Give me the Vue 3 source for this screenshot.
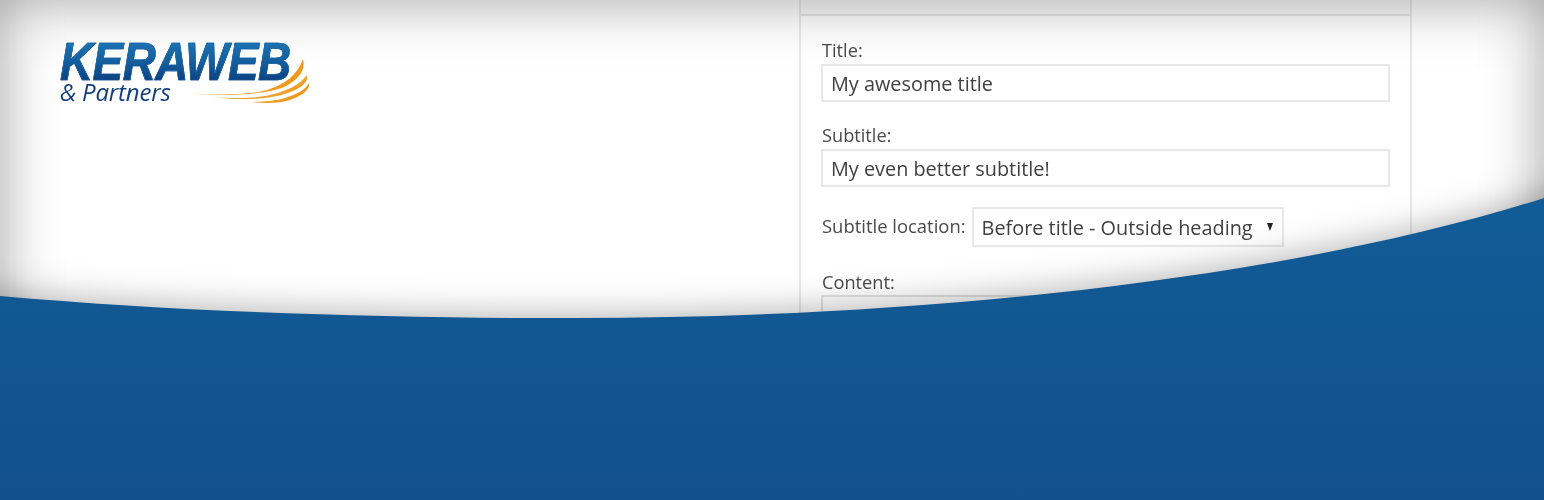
<script setup>
const wave = 'M1544 198 C 1280 282, 900 320, 550 318 C 380 318, 180 312, 0 296 L 0 500 L 1544 500 Z'
const sides = 'M-200 -200 H1744 V800 H-200 Z M0 0 H1544 V800 H0 Z'
const below = 'M-200 296 L0 296 C 180 312, 380 318, 550 318 C 900 320, 1280 282, 1544 198 L1744 150 V700 H-200 Z'
</script>

<template>
  <div class="banner">
    <div class="logo">
      <div class="logo-name">KERAWEB</div>
      <div class="logo-sub">&amp; Partners</div>
      <svg class="swoosh" viewBox="180 55 132 52" width="132" height="52">
        <path fill="#ef9a1f" d="M182 92.5 C 210 95.5, 240 95, 258 92 C 275 89, 296 80, 303 59 C 306 70, 299 79, 285 86.5 C 265 95.5, 215 97, 182 92.5 Z" />
        <path fill="#f0a02a" d="M212 97.5 C 240 98.5, 255 98, 268 95.5 C 285 92, 300 85, 307 75 C 309 83, 299 89, 289 92.5 C 270 100, 240 100, 212 97.5 Z" />
        <path fill="#ef9a1f" d="M252 102 C 270 101.5, 280 100, 288 97 C 297 94, 305 90, 309 83 C 310 89, 304 94, 296 97.5 C 285 103, 268 104, 252 102 Z" />
      </svg>
    </div>

    <div class="panel">
      <div class="panel-head"></div>
      <div class="panel-body">
        <label class="label">Title:</label>
        <input class="field" value="My awesome title" readonly />
        <label class="label label-next">Subtitle:</label>
        <input class="field" value="My even better subtitle!" readonly />
        <div class="location">
          <label class="label label-location">Subtitle location:</label>
          <div class="select">
            <span>Before title - Outside heading</span>
            <i class="arrow"></i>
          </div>
        </div>
        <label class="label label-content">Content:</label>
        <div class="textarea"></div>
      </div>
    </div>

    <svg class="overlay" viewBox="0 0 1544 500" width="1544" height="500">
      <defs>
        <filter id="softWide" filterUnits="userSpaceOnUse" x="-300" y="-300" width="2144" height="1200">
          <feGaussianBlur stdDeviation="30" />
        </filter>
        <filter id="softTight" filterUnits="userSpaceOnUse" x="-300" y="-300" width="2144" height="1200">
          <feGaussianBlur stdDeviation="18" />
        </filter>
        <linearGradient id="blue" x1="0" y1="198" x2="0" y2="500" gradientUnits="userSpaceOnUse">
          <stop offset="0" stop-color="#115c97" />
          <stop offset="1" stop-color="#12508c" />
        </linearGradient>
      </defs>
      <path :d="sides" fill="#000" fill-opacity="0.36" fill-rule="evenodd" filter="url(#softWide)" />
      <path :d="below" fill="#000" fill-opacity="0.34" filter="url(#softTight)" />
      <path :d="wave" fill="url(#blue)" />
    </svg>
  </div>
</template>

<style scoped>
.banner {
  position: relative;
  width: 1544px;
  height: 500px;
  overflow: hidden;
  background: #fff;
  display: flex;
  align-items: flex-start;
  font-family: "Open Sans", "Liberation Sans", sans-serif;
  color: #444;
}
.logo {
  position: relative;
  z-index: 2;
  width: 250px;
  margin: 42px 0 0 60px;
  flex: none;
}
.logo-name {
  width: max-content;
  font: italic 700 53px/40px "Liberation Sans", Arial, sans-serif;
  letter-spacing: -0.6px;
  transform-origin: left center;
  transform: scaleX(0.865);
  white-space: nowrap;
  background: linear-gradient(180deg, #1b72b3 0%, #14609f 45%, #0d3f80 100%);
  -webkit-background-clip: text;
  background-clip: text;
  color: transparent;
  -webkit-text-stroke: 0.7px #14609f;
  filter: blur(0.3px);
}
.logo-sub {
  font: italic 400 24px/22px "Open Sans", sans-serif;
  letter-spacing: -0.2px;
  color: #123f7c;
  margin-top: -1px;
  filter: blur(0.3px);
}
.swoosh {
  position: absolute;
  left: 120px;
  top: 13px;
}
.panel {
  flex: none;
  width: 613px;
  margin-left: 489px;
  height: 400px;
  border-left: 2px solid #e9e9e9;
  border-right: 2px solid #e9e9e9;
  box-sizing: border-box;
  filter: blur(0.35px);
}
.panel-head {
  height: 14px;
  background: #fbfbfb;
  border-bottom: 2px solid #e6e6e6;
}
.panel-body {
  display: flex;
  flex-direction: column;
  align-items: flex-start;
  padding: 21px 20px 0;
}
.label {
  font-size: 18.2px;
  line-height: 26px;
  color: #4a4a4a;
  display: block;
  padding-left: 1px;
  margin-bottom: 1px;
  white-space: nowrap;
}
.label-next {
  margin-top: 20px;
}
.label-location {
  font-size: 18.45px;
  margin-bottom: 2px;
}
.label-content {
  margin-top: 22px;
  margin-bottom: 0;
}
.field {
  box-sizing: border-box;
  width: 569px;
  height: 38px;
  border: 2px solid #e8e8e8;
  background: #fff;
  padding: 0 8px;
  font: 19.85px "Open Sans", sans-serif;
  color: #404040;
  outline: none;
}
.location {
  display: flex;
  align-items: center;
  gap: 6px;
  margin-top: 20px;
}
.select {
  box-sizing: border-box;
  width: 312px;
  height: 40px;
  border: 2px solid #e8e8e8;
  background: #fff;
  padding: 0 8px;
  font-size: 19.85px;
  line-height: 38px;
  color: #404040;
  position: relative;
  white-space: nowrap;
}
.arrow {
  position: absolute;
  right: 9px;
  top: 14px;
  width: 0;
  height: 0;
  border-left: 3.5px solid transparent;
  border-right: 3.5px solid transparent;
  border-top: 8px solid #222;
}
.textarea {
  box-sizing: border-box;
  width: 569px;
  height: 120px;
  border: 2px solid #e2e2e2;
  background: #fff;
}
.overlay {
  position: absolute;
  inset: 0;
  z-index: 1;
  pointer-events: none;
}
</style>
